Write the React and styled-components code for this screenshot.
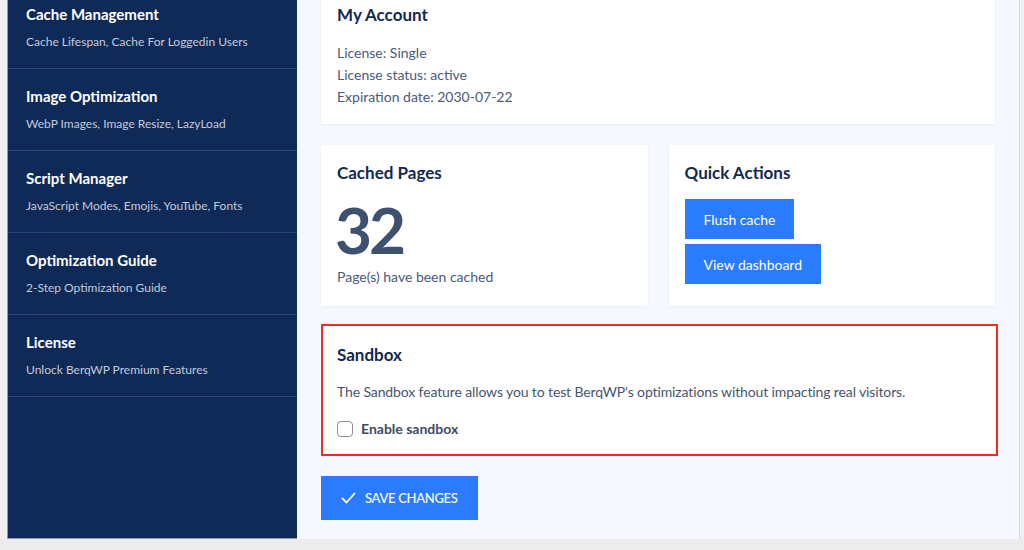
import React from "react";
import styled, { createGlobalStyle } from "styled-components";

const Global = createGlobalStyle`
  html, body { margin: 0; padding: 0; }
  body {
    background: #ececec;
    font-family: "Lato", "Liberation Sans", sans-serif;
    width: 1024px;
    height: 550px;
    overflow: hidden;
  }
  * { box-sizing: border-box; }
`;

const Frame = styled.div`
  display: flex;
  height: 539px;
  padding-left: 7px;
  padding-right: 4px;
  background: #f0f0f0;
  overflow: hidden;
`;

const Sidebar = styled.nav`
  width: 290px;
  flex: none;
  background: #0f2a56;
  border-left: 1px solid #8d9bb6;
  border-bottom: 1px solid #8d9bb6;
  overflow: hidden;
`;

const NavList = styled.ul`
  list-style: none;
  margin: -13px 0 0;
  padding: 0;
`;

const NavItem = styled.li`
  height: 82px;
  padding: 15px 18px 0;
  border-bottom: 1px solid #2b4471;
`;

const NavTitle = styled.div`
  color: #ffffff;
  font-size: 15px;
  font-weight: 700;
  line-height: 24px;
`;

const NavSub = styled.div`
  margin-top: 7px;
  color: #c3cbdb;
  font-size: 12px;
  line-height: 18px;
`;

const Main = styled.main`
  flex: 1;
  background: #f5f8fe;
  border-right: 1px solid #dadada;
  padding: 0 24px;
  overflow: hidden;
`;

const Content = styled.div`
  margin-top: -13px;
  display: flex;
  flex-direction: column;
`;

const Card = styled.section`
  background: #ffffff;
  padding: 16px;
  box-shadow: 0 1px 3px rgba(30, 50, 90, 0.06);
`;

const CardTitle = styled.h2`
  margin: 0;
  color: #13294d;
  font-size: 17px;
  font-weight: 700;
  line-height: 24px;
`;

const InfoList = styled.div`
  margin-top: 15px;
`;

const Line = styled.p`
  margin: 0;
  color: #4b5a78;
  font-size: 14px;
  line-height: 22px;
`;

const Row = styled.div`
  display: grid;
  grid-template-columns: 1fr 1fr;
  gap: 21px;
  margin-top: 21px;
`;

const StatCard = styled(Card)`
  height: 161px;
`;

const BigNumber = styled.div`
  margin-top: 13px;
  color: #3f5170;
  font-size: 64px;
  font-weight: 700;
  line-height: 64px;
  letter-spacing: -3px;
  margin-left: -2px;
`;

const Caption = styled(Line)`
  margin-top: 4px;
`;

const Actions = styled.div`
  margin-top: 14px;
  display: flex;
  flex-direction: column;
  align-items: flex-start;
  gap: 5px;
`;

const Button = styled.button`
  display: inline-flex;
  align-items: center;
  gap: 9px;
  height: ${(p) => (p.$large ? "44px" : "40px")};
  padding: 0 ${(p) => (p.$large ? "20px" : "19px")};
  border: none;
  border-radius: 0;
  background: #2b7bff;
  color: #ffffff;
  font-family: inherit;
  font-size: ${(p) => (p.$large ? "13px" : "14px")};
  letter-spacing: ${(p) => (p.$large ? "-0.3px" : "0")};
  font-weight: ${(p) => (p.$large ? 500 : 400)};
  text-transform: ${(p) => (p.$large ? "uppercase" : "none")};
  cursor: pointer;
`;

const Sandbox = styled.section`
  margin-top: 18px;
  margin-right: -3px;
  background: #ffffff;
  border: 2px solid #f32a1f;
  padding: 17px 14px 14px;
`;

const Desc = styled(Line)`
  margin-top: 14px;
  color: #46556f;
  letter-spacing: -0.12px;
`;

const CheckRow = styled.label`
  margin-top: 15px;
  display: flex;
  align-items: center;
  gap: 8px;
  color: #3d4a66;
  font-size: 14px;
  font-weight: 700;
  line-height: 22px;
`;

const Box = styled.span`
  width: 16px;
  height: 16px;
  border: 1px solid #8c8f94;
  border-radius: 4px;
  background: #fff;
  flex: none;
`;

const SaveWrap = styled.div`
  margin-top: 20px;
`;

const nav = [
  ["Cache Management", "Cache Lifespan, Cache For Loggedin Users"],
  ["Image Optimization", "WebP Images, Image Resize, LazyLoad"],
  ["Script Manager", "JavaScript Modes, Emojis, YouTube, Fonts"],
  ["Optimization Guide", "2-Step Optimization Guide"],
  ["License", "Unlock BerqWP Premium Features"],
];

export default function App() {
  return (
    <>
      <Global />
      <Frame>
        <Sidebar>
          <NavList>
            {nav.map(([t, s]) => (
              <NavItem key={t}>
                <NavTitle>{t}</NavTitle>
                <NavSub>{s}</NavSub>
              </NavItem>
            ))}
          </NavList>
        </Sidebar>
        <Main>
          <Content>
            <Card>
              <CardTitle>My Account</CardTitle>
              <InfoList>
                <Line>License: Single</Line>
                <Line>License status: active</Line>
                <Line>Expiration date: 2030-07-22</Line>
              </InfoList>
            </Card>
            <Row>
              <StatCard>
                <CardTitle>Cached Pages</CardTitle>
                <BigNumber>32</BigNumber>
                <Caption>Page(s) have been cached</Caption>
              </StatCard>
              <StatCard>
                <CardTitle>Quick Actions</CardTitle>
                <Actions>
                  <Button>Flush cache</Button>
                  <Button>View dashboard</Button>
                </Actions>
              </StatCard>
            </Row>
            <Sandbox>
              <CardTitle>Sandbox</CardTitle>
              <Desc>
                The Sandbox feature allows you to test BerqWP's optimizations without impacting real visitors.
              </Desc>
              <CheckRow>
                <Box />
                Enable sandbox
              </CheckRow>
            </Sandbox>
            <SaveWrap>
              <Button $large>
                <svg width="15" height="12" viewBox="0 0 15 12" fill="none">
                  <path d="M1.5 6.5 L5.5 10.5 L13.5 1.5" stroke="#fff" strokeWidth="1.8" strokeLinecap="round" strokeLinejoin="round" />
                </svg>
                Save Changes
              </Button>
            </SaveWrap>
          </Content>
        </Main>
      </Frame>
    </>
  );
}
